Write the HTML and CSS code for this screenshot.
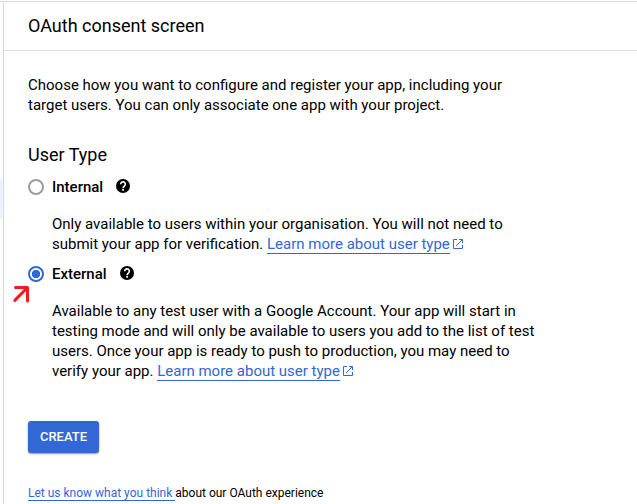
FILE: index.html
```html
<!DOCTYPE html>
<html lang="en">
<head>
<meta charset="utf-8">
<title>OAuth consent screen</title>
<link rel="stylesheet" href="styles.css">
</head>
<body>
<div class="shell">
  <nav class="rail"><div class="rail-active"></div></nav>
  <main class="page">
    <header class="page-header"><h1>OAuth consent screen</h1></header>
    <section class="content">
      <p class="intro">Choose how you want to configure and register your app, including your<br>target users. You can only associate one app with your project.</p>
      <h2>User Type</h2>
      <div class="option">
        <span class="radio"></span><span class="label">Internal</span>
        <svg class="help" viewBox="0 0 14 14"><circle cx="7" cy="7" r="7"/><path d="M4.7 5.2a2.3 2.3 0 1 1 3.9 1.6C7.6 7.7 7.1 8 7.1 9.3" fill="none" stroke="#fff" stroke-width="1.6"/><path d="M6.2 10.1h1.7v1.7H6.2z" fill="#fff"/></svg>
      </div>
      <p class="desc">Only available to users within your organisation. You will not need to<br>submit your app for verification. <a class="link">Learn more about user type</a><svg class="ext" viewBox="0 0 10 10"><path d="M4 .5H.5v9h9V6M6 .5h3.5V4M9.3.7 3 7"/></svg></p>
      <div class="option">
        <span class="radio checked"></span><span class="label">External</span>
        <svg class="help" viewBox="0 0 14 14"><circle cx="7" cy="7" r="7"/><path d="M4.7 5.2a2.3 2.3 0 1 1 3.9 1.6C7.6 7.7 7.1 8 7.1 9.3" fill="none" stroke="#fff" stroke-width="1.6"/><path d="M6.2 10.1h1.7v1.7H6.2z" fill="#fff"/></svg>
        <svg class="pointer" viewBox="0 0 18 18"><path d="M3.5 2.5h12V16M15 3 2.8 15.4"/></svg>
      </div>
      <p class="desc">Available to any test user with a Google Account. Your app will start in<br>testing mode and will only be available to users you add to the list of test<br>users. Once your app is ready to push to production, you may need to<br>verify your app. <a class="link">Learn more about user type</a><svg class="ext" viewBox="0 0 10 10"><path d="M4 .5H.5v9h9V6M6 .5h3.5V4M9.3.7 3 7"/></svg></p>
      <button class="create">CREATE</button>
      <p class="feedback"><a class="link">Let us know what you think&nbsp;</a>about our OAuth experience</p>
    </section>
  </main>
</div>
</body>
</html>
```
FILE: styles.css
```css
* { box-sizing: border-box; }
body { margin: 0; background: #fff; color: #000; font-family: Roboto, sans-serif; overflow: hidden; }
h1, h2, p { margin: 0; font-weight: 400; }
.shell { display: flex; height: 504px; padding-top: 1px; }
.rail { width: 4px; border-top: 1px solid #dfdfdf; border-right: 1px solid #dadada; padding-top: 177px; }
.rail-active { height: 40px; background: #edf3fe; }
.page { flex: 1; }
.page-header { height: 50px; border-top: 1px solid #dfdfdf; border-bottom: 1px solid #dfdfdf; padding: 0 24px; display: flex; align-items: center; }
h1, h2 { font-size: 18px; line-height: 24px; }
.content { padding: 24px 24px 0; }
.intro, .desc { font-size: 15px; line-height: 20px; white-space: nowrap; }
h2 { margin-top: 28px; }
.option { position: relative; display: flex; align-items: center; height: 20px; margin-top: 10px; }
.radio { width: 16px; height: 16px; border: 2px solid #9e9e9e; border-radius: 50%; margin-right: 8px; }
.radio.checked { border-color: #3367d6; background: radial-gradient(circle, #3367d6 3.9px, #fff 4.5px); }
.label { font-size: 15px; line-height: 20px; font-weight: 500; }
.help { width: 14px; height: 14px; margin: 0 0 2px 13px; }
.pointer { position: absolute; left: -16px; top: 21px; width: 18px; height: 18px; fill: none; stroke: #ed1c24; stroke-width: 3; stroke-linecap: round; stroke-linejoin: round; }
.desc { margin: 17px 0 0 24px; }
.link { color: #3367d6; border-bottom: 1px solid #3367d6; }
.ext { width: 10px; height: 10px; margin-left: 3px; fill: none; stroke: #3367d6; }
.create { display: block; width: 71px; height: 32px; margin-top: 40px; padding: 0; border: 0; border-radius: 3px; background: #3367d6; color: #fff; font: 500 13px/32px Roboto, sans-serif; box-shadow: 0 1px 2px rgba(0,0,0,.4); }
.feedback { margin-top: 32px; font-size: 12px; line-height: 16px; white-space: nowrap; }
```
